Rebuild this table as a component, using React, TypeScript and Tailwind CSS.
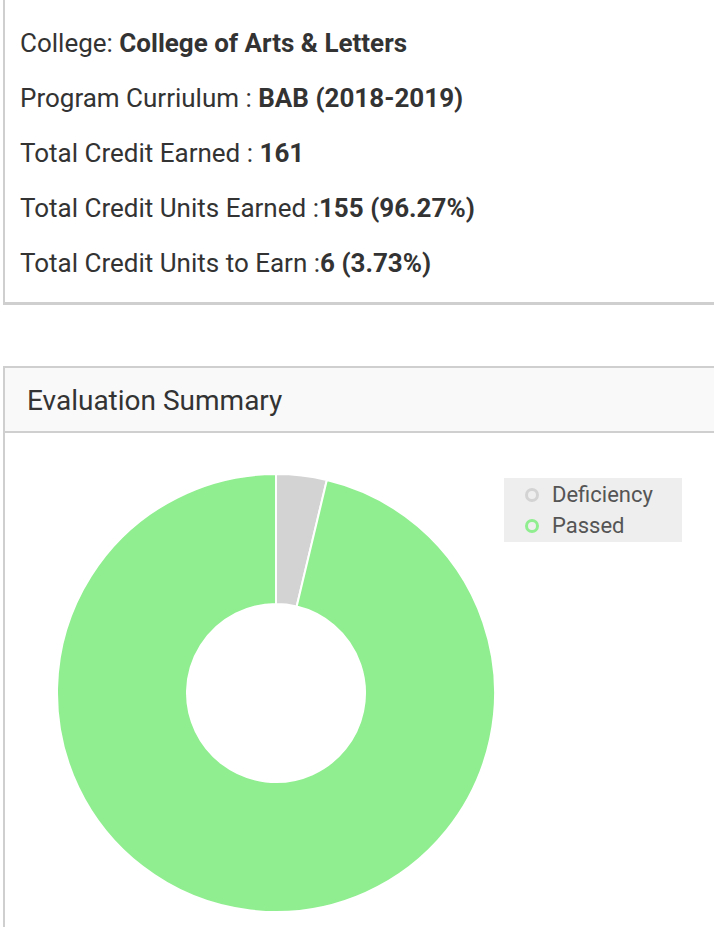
import React from "react";

function arcPath(cx: number, cy: number, R: number, r: number, a0: number, a1: number) {
  const p = (rad: number, a: number) => {
    const t = (a - 90) * (Math.PI / 180);
    return [cx + rad * Math.cos(t), cy + rad * Math.sin(t)];
  };
  const large = a1 - a0 > 180 ? 1 : 0;
  const [x0, y0] = p(R, a0);
  const [x1, y1] = p(R, a1);
  const [x2, y2] = p(r, a1);
  const [x3, y3] = p(r, a0);
  return `M ${x0} ${y0} A ${R} ${R} 0 ${large} 1 ${x1} ${y1} L ${x2} ${y2} A ${r} ${r} 0 ${large} 0 ${x3} ${y3} Z`;
}

export default function App() {
  const defAngle = 3.73 * 3.6;
  const cx = 271;
  const cy = 260;
  return (
    <div className="min-h-[928px] bg-white pl-[3px] text-[#333]" style={{ fontFamily: "Roboto, 'Liberation Sans', sans-serif" }}>
      <div className="border-l-2 border-b-[3px] border-[#cfcfcf] pt-[16px] pb-[11px] pl-[15px] text-[26px]">
        <p className="leading-[55px]">College: <b className="font-bold">College of Arts &amp; Letters</b></p>
        <p className="leading-[55px]">Program Curriulum : <b className="font-bold">BAB (2018-2019)</b></p>
        <p className="leading-[55px]">Total Credit Earned : <b className="font-bold">161</b></p>
        <p className="leading-[55px]">Total Credit Units Earned :<b className="font-bold">155 (96.27%)</b></p>
        <p className="leading-[55px]">Total Credit Units to Earn :<b className="font-bold">6 (3.73%)</b></p>
      </div>

      <div className="mt-[61px] border-t-2 border-l-2 border-[#cfcfcf]">
        <div className="h-[65px] bg-[#f9f9f9] border-b-2 border-[#cfcfcf] flex items-center pl-[22px] pt-[2px] text-[28px] text-[#333]">
          Evaluation Summary
        </div>
        <div className="relative h-[494px]">
          <svg width="560" height="494" className="block">
            <path d={arcPath(cx, cy, 219, 89, 0, defAngle)} fill="#d3d3d3" stroke="#fff" strokeWidth="2" />
            <path d={arcPath(cx, cy, 219, 89, defAngle, 359.999)} fill="#90ee90" stroke="#fff" strokeWidth="2" />
          </svg>
          <div className="absolute left-[499px] top-[45px] w-[178px] h-[64px] bg-[#eeeeee] flex flex-col justify-center pl-[21px] text-[22px] text-[#555]">
            <div className="flex items-center h-[31px]">
              <span className="w-[14px] h-[14px] rounded-full border-[3px] border-[#d3d3d3] mr-[13px]" />
              Deficiency
            </div>
            <div className="flex items-center h-[31px]">
              <span className="w-[14px] h-[14px] rounded-full border-[3px] border-[#90ee90] mr-[13px]" />
              Passed
            </div>
          </div>
        </div>
      </div>
    </div>
  );
}
